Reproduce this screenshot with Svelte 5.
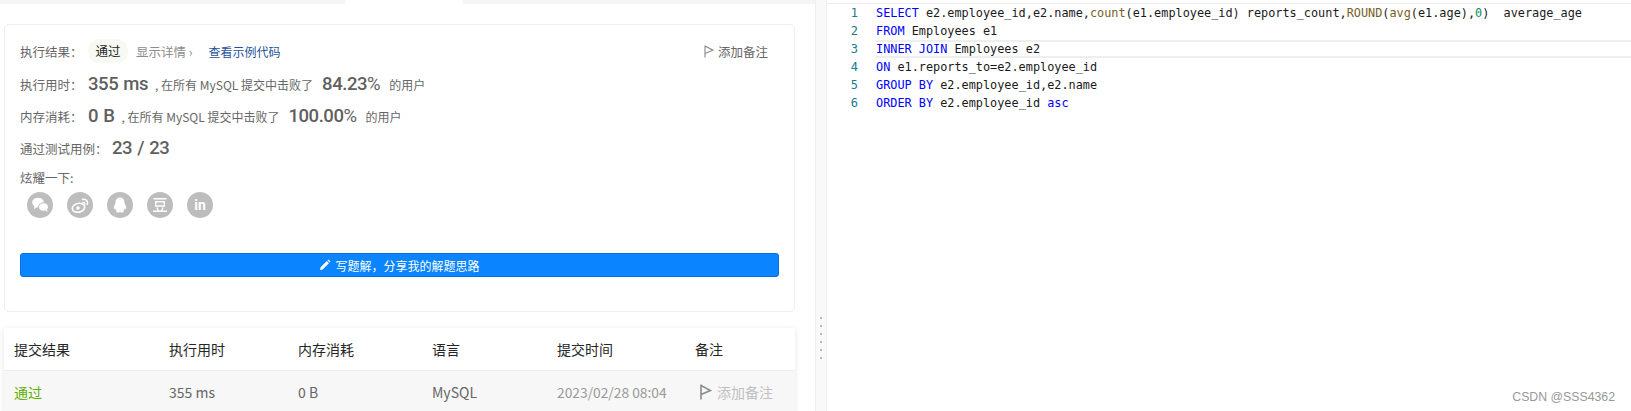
<script>
  const shares = ["wechat", "weibo", "qq", "douban", "linkedin"];
  const columns = [
    { title: "提交结果", value: "通过", cls: "pass" },
    { title: "执行用时", value: "355 ms" },
    { title: "内存消耗", value: "0 B" },
    { title: "语言", value: "MySQL" },
    { title: "提交时间", value: "2023/02/28 08:04", cls: "time" }
  ];
</script>

<div class="page">
  <div class="left">
    <div class="tabs">
      <div class="tab"></div>
      <div class="tab active"></div>
      <div class="tab"></div>
    </div>

    <section class="card">
      <div class="row result">
        <span class="label">执行结果：</span>
        <span class="pill">通过</span>
        <span class="detail">显示详情 <i>›</i></span>
        <span class="link">查看示例代码</span>
        <span class="note">
          <svg width="10" height="13" viewBox="0 0 10 13"><path d="M1 0.5V12.5M1 1L9 5.2L1 8.6" fill="none" stroke="#888" stroke-width="1.1" /></svg>
          添加备注
        </span>
      </div>
      <div class="row stat-time">
        <span class="label">执行用时：</span>
        <b class="num first">355 ms</b>
        <span class="text">, 在所有 MySQL 提交中击败了</span>
        <b class="num pct">84.23<em>%</em></b>
        <span class="text">的用户</span>
      </div>
      <div class="row stat-mem">
        <span class="label">内存消耗：</span>
        <b class="num first">0 B</b>
        <span class="text">, 在所有 MySQL 提交中击败了</span>
        <b class="num pct">100.00<em>%</em></b>
        <span class="text">的用户</span>
      </div>
      <div class="row stat-cases">
        <span class="label wide">通过测试用例：</span>
        <b class="num cases">23 / 23</b>
      </div>
      <div class="share-label">炫耀一下:</div>
      <div class="shares">
        {#each shares as s}
          <span class="share">
            {#if s === "wechat"}
              <svg width="26" height="26" viewBox="0 0 26 26" fill="#fff">
                <ellipse cx="11" cy="10.5" rx="5.8" ry="4.8" />
                <path d="M7.5 13.5L7 17L10.5 15Z" />
                <ellipse cx="16.5" cy="15" rx="5" ry="4.2" stroke="#bdbdbd" stroke-width="1" />
                <path d="M18.5 18L20.5 20.2L20.2 17.2Z" />
              </svg>
            {:else if s === "weibo"}
              <svg width="26" height="26" viewBox="0 0 26 26">
                <ellipse cx="11.5" cy="15.8" rx="6.3" ry="4.4" fill="none" stroke="#fff" stroke-width="1.6" transform="rotate(-12 11.5 15.8)" />
                <circle cx="11" cy="16" r="1.8" fill="#fff" />
                <path d="M15 7.5C18.5 6.3 21.5 9 20.3 13" fill="none" stroke="#fff" stroke-width="1.5" />
                <path d="M15.5 10.4C17 10 18.3 11 17.8 12.6" fill="none" stroke="#fff" stroke-width="1.3" />
              </svg>
            {:else if s === "qq"}
              <svg width="26" height="26" viewBox="0 0 26 26" fill="#fff">
                <path d="M13 5.5C9.8 5.5 8.5 8 8.5 10.5C8.5 12 7 13.5 6.8 15.5C6.7 17 7.3 17.6 8.3 16.6C8.6 18 9.3 18.7 9.8 19.1C8.8 19.6 8.8 20.6 10.6 20.6C11.8 20.6 12.6 20.3 13 19.9C13.4 20.3 14.2 20.6 15.4 20.6C17.2 20.6 17.2 19.6 16.2 19.1C16.7 18.7 17.4 18 17.7 16.6C18.7 17.6 19.3 17 19.2 15.5C19 13.5 17.5 12 17.5 10.5C17.5 8 16.2 5.5 13 5.5Z" />
              </svg>
            {:else if s === "douban"}
              <svg width="26" height="26" viewBox="0 0 26 26" fill="none" stroke="#fff" stroke-width="1.4">
                <path d="M6.5 6.8H19.5M8.7 9.8H17.3V14H8.7ZM10 15.5L11.3 18.8M16 15.5L14.7 18.8M6 19.3H20" />
              </svg>
            {:else}
              <span class="in">in</span>
            {/if}
          </span>
        {/each}
      </div>
      <button class="write">
        <svg width="12" height="12" viewBox="0 0 12 12" fill="#fff"><path d="M1 11L1.6 8.3L7.8 2.1L9.9 4.2L3.7 10.4ZM8.5 1.4L9.5 0.5L11.5 2.5L10.6 3.5Z" /></svg>
        写题解，分享我的解题思路
      </button>
    </section>

    <section class="table">
      <div class="cols head">
        {#each columns as c}<span>{c.title}</span>{/each}
        <span>备注</span>
      </div>
      <div class="cols body">
        {#each columns as c}<span class={c.cls}>{c.value}</span>{/each}
        <span class="add">
          <svg width="12" height="16" viewBox="0 0 12 16"><path d="M1 0.5V15.5M1 1.5L10.5 6.5L1 10.5" fill="none" stroke="#8c8c8c" stroke-width="1.6" /></svg>
          添加备注
        </span>
      </div>
    </section>
  </div>

  <div class="splitter">
    {#each Array(6) as _}<i></i>{/each}
  </div>

  <div class="editor">
    <div class="code">
      <div class="line"><span class="no">1</span><span><span class="kw">SELECT</span> e2.employee_id,e2.name,<span class="fn">count</span>(e1.employee_id) reports_count,<span class="fn">ROUND</span>(<span class="fn">avg</span>(e1.age),<span class="n">0</span>)  average_age</span></div>
      <div class="line"><span class="no">2</span><span><span class="kw">FROM</span> Employees e1</span></div>
      <div class="line current"><span class="no">3</span><span class="src"><span class="kw">INNER</span> <span class="kw">JOIN</span> Employees e2</span></div>
      <div class="line"><span class="no">4</span><span><span class="kw">ON</span> e1.reports_to=e2.employee_id</span></div>
      <div class="line"><span class="no">5</span><span><span class="kw">GROUP</span> <span class="kw">BY</span> e2.employee_id,e2.name</span></div>
      <div class="line"><span class="no">6</span><span><span class="kw">ORDER</span> <span class="kw">BY</span> e2.employee_id <span class="kw">asc</span></span></div>
    </div>
  </div>

  <div class="watermark">CSDN @SSS4362</div>
</div>

<style>
  :global(body) {
    margin: 0;
    background: #fff;
  }

  .page {
    position: relative;
    display: flex;
    width: 1631px;
    height: 411px;
    overflow: hidden;
    font-family: "Noto Sans CJK SC", "Open Sans", sans-serif;
    color: #666;
  }

  .left {
    width: 815px;
    flex: none;
  }

  .tabs {
    display: flex;
    height: 4px;
    background: #f5f5f5;
  }

  .tab {
    width: 345px;
  }

  .tab.active {
    width: 118px;
    background: #fff;
  }

  .card {
    box-sizing: border-box;
    width: 791px;
    height: 288px;
    margin: 20px 0 16px 4px;
    padding: 14px 15px 0;
    border: 1px solid #eee;
    border-radius: 5px;
  }

  .row {
    display: flex;
    align-items: center;
    white-space: nowrap;
  }

  .label {
    width: 68px;
    flex: none;
    font-size: 12.5px;
    color: #666;
  }

  .label.wide {
    width: 92px;
  }

  .result {
    height: 24px;
  }

  .pill {
    box-sizing: border-box;
    width: 40px;
    height: 24px;
    line-height: 24px;
    text-align: center;
    border-radius: 12px;
    background: #f6faf2;
    font-size: 12.5px;
    color: #262626;
  }

  .detail {
    margin-left: 8px;
    font-size: 12.5px;
    color: #8c8c8c;
  }

  .detail i {
    font-style: normal;
  }

  .link {
    margin-left: 16px;
    font-size: 12px;
    color: #24509a;
  }

  .note {
    display: flex;
    align-items: center;
    gap: 4px;
    margin-left: auto;
    margin-right: 11px;
    font-size: 12.5px;
    color: #666;
  }

  .stat-time,
  .stat-mem,
  .stat-cases {
    height: 24px;
  }

  .stat-time {
    margin-top: 9px;
  }

  .stat-mem {
    margin-top: 8px;
  }

  .stat-cases {
    margin-top: 8px;
  }

  .num {
    font-family: Roboto, sans-serif;
    font-size: 18.5px;
    font-weight: 500;
    letter-spacing: -0.45px;
    color: #5f5f5f;
  }

  .num em {
    font-style: normal;
    font-weight: 400;
  }

  .first {
    margin-right: 7px;
    word-spacing: 1px;
  }

  .text {
    font-size: 12px;
    color: #666;
  }

  .pct {
    margin: 0 9px;
  }

  .cases {
    word-spacing: 1px;
  }

  .share-label {
    margin-top: 9px;
    font-size: 12.5px;
    line-height: 18px;
    color: #666;
  }

  .shares {
    display: flex;
    gap: 14px;
    margin: 5px 0 0 7px;
  }

  .share {
    display: flex;
    align-items: center;
    justify-content: center;
    width: 26px;
    height: 26px;
    border-radius: 50%;
    background: #bdbdbd;
  }

  .in {
    font-family: Roboto, sans-serif;
    font-size: 14px;
    font-weight: 700;
    color: #fff;
  }

  .write {
    display: flex;
    align-items: center;
    justify-content: center;
    gap: 4px;
    box-sizing: border-box;
    width: 759px;
    height: 24px;
    margin-top: 35px;
    padding: 0;
    border: 1px solid #0a6fd8;
    border-radius: 3px;
    background: #0a84ff;
    font-family: inherit;
    font-size: 12px;
    color: #fff;
  }

  .table {
    width: 791px;
    margin-left: 4px;
    box-shadow: 0 1px 6px rgba(0, 0, 0, 0.1);
  }

  .cols {
    display: grid;
    grid-template-columns: 155px 129px 134px 125px 138px 1fr;
    align-items: center;
    padding-left: 10px;
    font-size: 14px;
  }

  .head {
    height: 43px;
    border-bottom: 1px solid #eee;
    box-sizing: border-box;
    color: #262626;
  }

  .body {
    height: 42px;
    background: #f7f7f7;
    color: #666;
  }

  .pass {
    color: #5cb000;
  }

  .time {
    font-size: 13.8px;
    color: #999;
  }

  .add {
    display: flex;
    align-items: center;
    gap: 5px;
    padding-left: 5px;
    color: #bfbfbf;
  }

  .splitter {
    display: flex;
    flex-direction: column;
    align-items: center;
    justify-content: flex-start;
    gap: 6px;
    box-sizing: border-box;
    width: 12px;
    flex: none;
    padding-top: 317px;
    border-left: 1px solid #eee;
    border-right: 1px solid #eee;
    background: #f9f9f9;
  }

  .splitter i {
    width: 2px;
    height: 2px;
    background: #bbb;
  }

  .editor {
    flex: 1;
    min-width: 0;
    padding-top: 3px;
  }

  .code {
    border-top: 1px solid #eee;
    font-family: "DejaVu Sans Mono", monospace;
    font-size: 11.85px;
    color: #1a1a1a;
  }

  .line {
    display: flex;
    height: 18px;
    line-height: 18px;
    white-space: pre;
  }

  .no {
    width: 49px;
    flex: none;
    padding-right: 18px;
    box-sizing: border-box;
    text-align: right;
    font-size: 12px;
    color: #237893;
  }

  .current .src {
    flex: 1;
    box-sizing: border-box;
    height: 18px;
    border-top: 2px solid #eee;
    border-bottom: 2px solid #eee;
    line-height: 14px;
  }

  .kw {
    color: #0000ff;
  }

  .fn {
    color: #795e26;
  }

  .n {
    color: #09885a;
  }

  .watermark {
    position: absolute;
    right: 16px;
    bottom: 7px;
    font-family: "Liberation Sans", sans-serif;
    font-size: 12.3px;
    color: #999;
  }
</style>
